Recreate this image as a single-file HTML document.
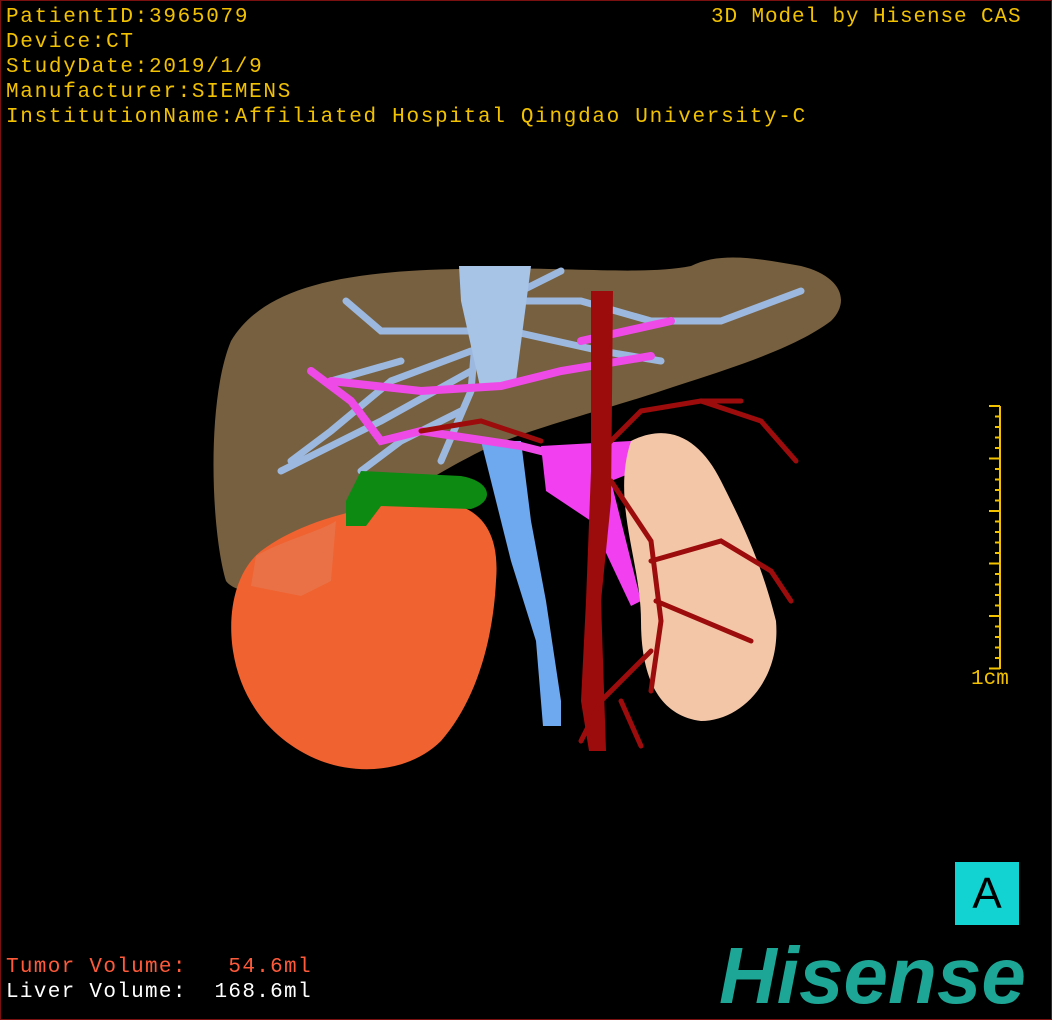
<!DOCTYPE html>
<html><head><style>
html,body{margin:0;padding:0;background:#000;}
#w{position:relative;width:1052px;height:1020px;overflow:hidden;background:#000;box-sizing:border-box;border:1px solid #7a1010;}
.t{position:absolute;font-family:"Liberation Mono","DejaVu Sans Mono",monospace;font-size:21px;color:#f2c200;white-space:pre;line-height:25px;letter-spacing:1.7px;}
.r{color:#ff5a3a;}
.b{color:#fff;}
</style></head><body><div id="w">
<svg width="1052" height="1020" style="position:absolute;left:0;top:0">
<!-- liver -->
<path d="M230 340 C260 290 330 270 460 268 C560 265 640 275 690 265 C720 250 760 258 800 265 C840 275 850 300 830 320 C790 350 720 370 660 390 C600 410 520 430 480 450 C420 480 360 520 330 560 C300 590 240 600 225 580 C210 530 205 400 230 340Z" fill="#77603f"/>
<g stroke="#9cb8df" stroke-width="7" fill="none" stroke-linecap="round">
<path d="M480 270 L470 390 L440 460"/>
<path d="M470 330 L380 330 L345 300"/>
<path d="M470 350 L390 380 L330 430 L290 460"/>
<path d="M470 370 L380 420 L280 470"/>
<path d="M500 300 L580 300 L650 320 L720 320 L800 290"/>
<path d="M510 330 L600 350 L660 360"/>
<path d="M460 410 L400 440 L360 470"/>
<path d="M520 290 L560 270"/>
<path d="M400 360 L330 380"/>
</g>
<path d="M458 265 L530 265 L515 380 L480 390 L460 300Z" fill="#a7c3e6"/>
<path d="M480 440 L520 440 L530 520 L545 600 L560 700 L560 725 L542 725 L535 640 L510 560 L490 480Z" fill="#6ea8ee"/>
<g stroke="#ee4ae8" stroke-width="8" fill="none" stroke-linecap="round">
<path d="M420 430 L520 445 L560 455 L600 460"/>
<path d="M330 380 L420 390 L500 385 L560 370 L650 355"/>
<path d="M310 370 L350 400 L380 440 L420 430"/>
<path d="M580 340 L670 320"/>
</g>
<path d="M540 445 L630 440 L635 470 L610 480 L640 600 L630 605 L590 520 L545 490Z" fill="#f23ff0"/>
<path d="M630 440 C670 420 700 440 720 480 C740 520 760 560 775 620 C780 680 740 720 700 720 C660 715 640 680 640 620 C640 560 610 500 630 440Z" fill="#f3c6a8"/>
<path d="M590 290 L612 290 L610 500 L600 600 L605 750 L588 750 L580 700 L585 600 L590 470Z" fill="#9d0c0c"/>
<g stroke="#9d0c0c" stroke-width="5" fill="none" stroke-linecap="round">
<path d="M600 450 L640 410 L700 400 L760 420 L795 460"/>
<path d="M700 400 L740 400"/>
<path d="M610 480 L650 540 L660 620 L650 690"/>
<path d="M650 560 L720 540 L770 570"/>
<path d="M655 600 L750 640"/>
<path d="M650 650 L600 700 L580 740"/>
<path d="M620 700 L640 745"/>
<path d="M420 430 L480 420 L540 440"/>
<path d="M770 570 L790 600"/>
</g>
<path d="M260 550 C300 520 360 505 420 500 C470 498 500 520 495 580 C492 640 475 700 440 740 C410 770 360 775 320 760 C270 740 240 700 232 650 C226 610 235 570 260 550Z" fill="#f0622f"/>
<path d="M255 555 C280 540 320 530 335 520 L330 580 L300 595 L250 585Z" fill="#e77750" opacity="0.7"/>
<path d="M360 470 L460 475 C490 480 495 500 470 508 L380 505 L365 525 L345 525 L345 500Z" fill="#0c8a12"/>
<g stroke="#f2c200" stroke-width="2">
<line x1="999" y1="405" x2="999" y2="668"/>
</g>
<g id="ticks" stroke="#f2c200" stroke-width="2"></g>
<rect x="954" y="861" width="64" height="63" fill="#12d2d2"/>
</svg>
<div class="t" style="left:5px;top:4px">PatientID:3965079
Device:CT
StudyDate:2019/1/9
Manufacturer:SIEMENS
InstitutionName:Affiliated Hospital Qingdao University-C</div>
<div class="t" style="left:710px;top:4px;letter-spacing:0.9px">3D Model by Hisense CAS</div>
<div class="t r" style="left:5px;top:954px;letter-spacing:1.3px">Tumor Volume:   54.6ml</div>
<div class="t b" style="left:5px;top:979px;letter-spacing:1.3px">Liver Volume:  168.6ml</div>
<div class="t" style="left:970px;top:666px;letter-spacing:0">1cm</div>
<div style="position:absolute;left:954px;top:861px;width:64px;height:63px;font:44px 'Liberation Sans',sans-serif;color:#000;text-align:center;line-height:63px">A</div>
<div style="position:absolute;left:718px;top:935px;font:italic bold 80px 'Liberation Sans',sans-serif;color:#1da595;letter-spacing:0px;line-height:80px">Hisense</div>
</div>
<script>
var g=document.getElementById('ticks'),s='';
for(var i=0;i<=25;i++){var y=405+i*10.5;var l=(i%5==0)?11:5;s+='<line x1="'+(999-l)+'" y1="'+y+'" x2="999" y2="'+y+'"/>';}
g.innerHTML=s;
</script>
</body></html>
